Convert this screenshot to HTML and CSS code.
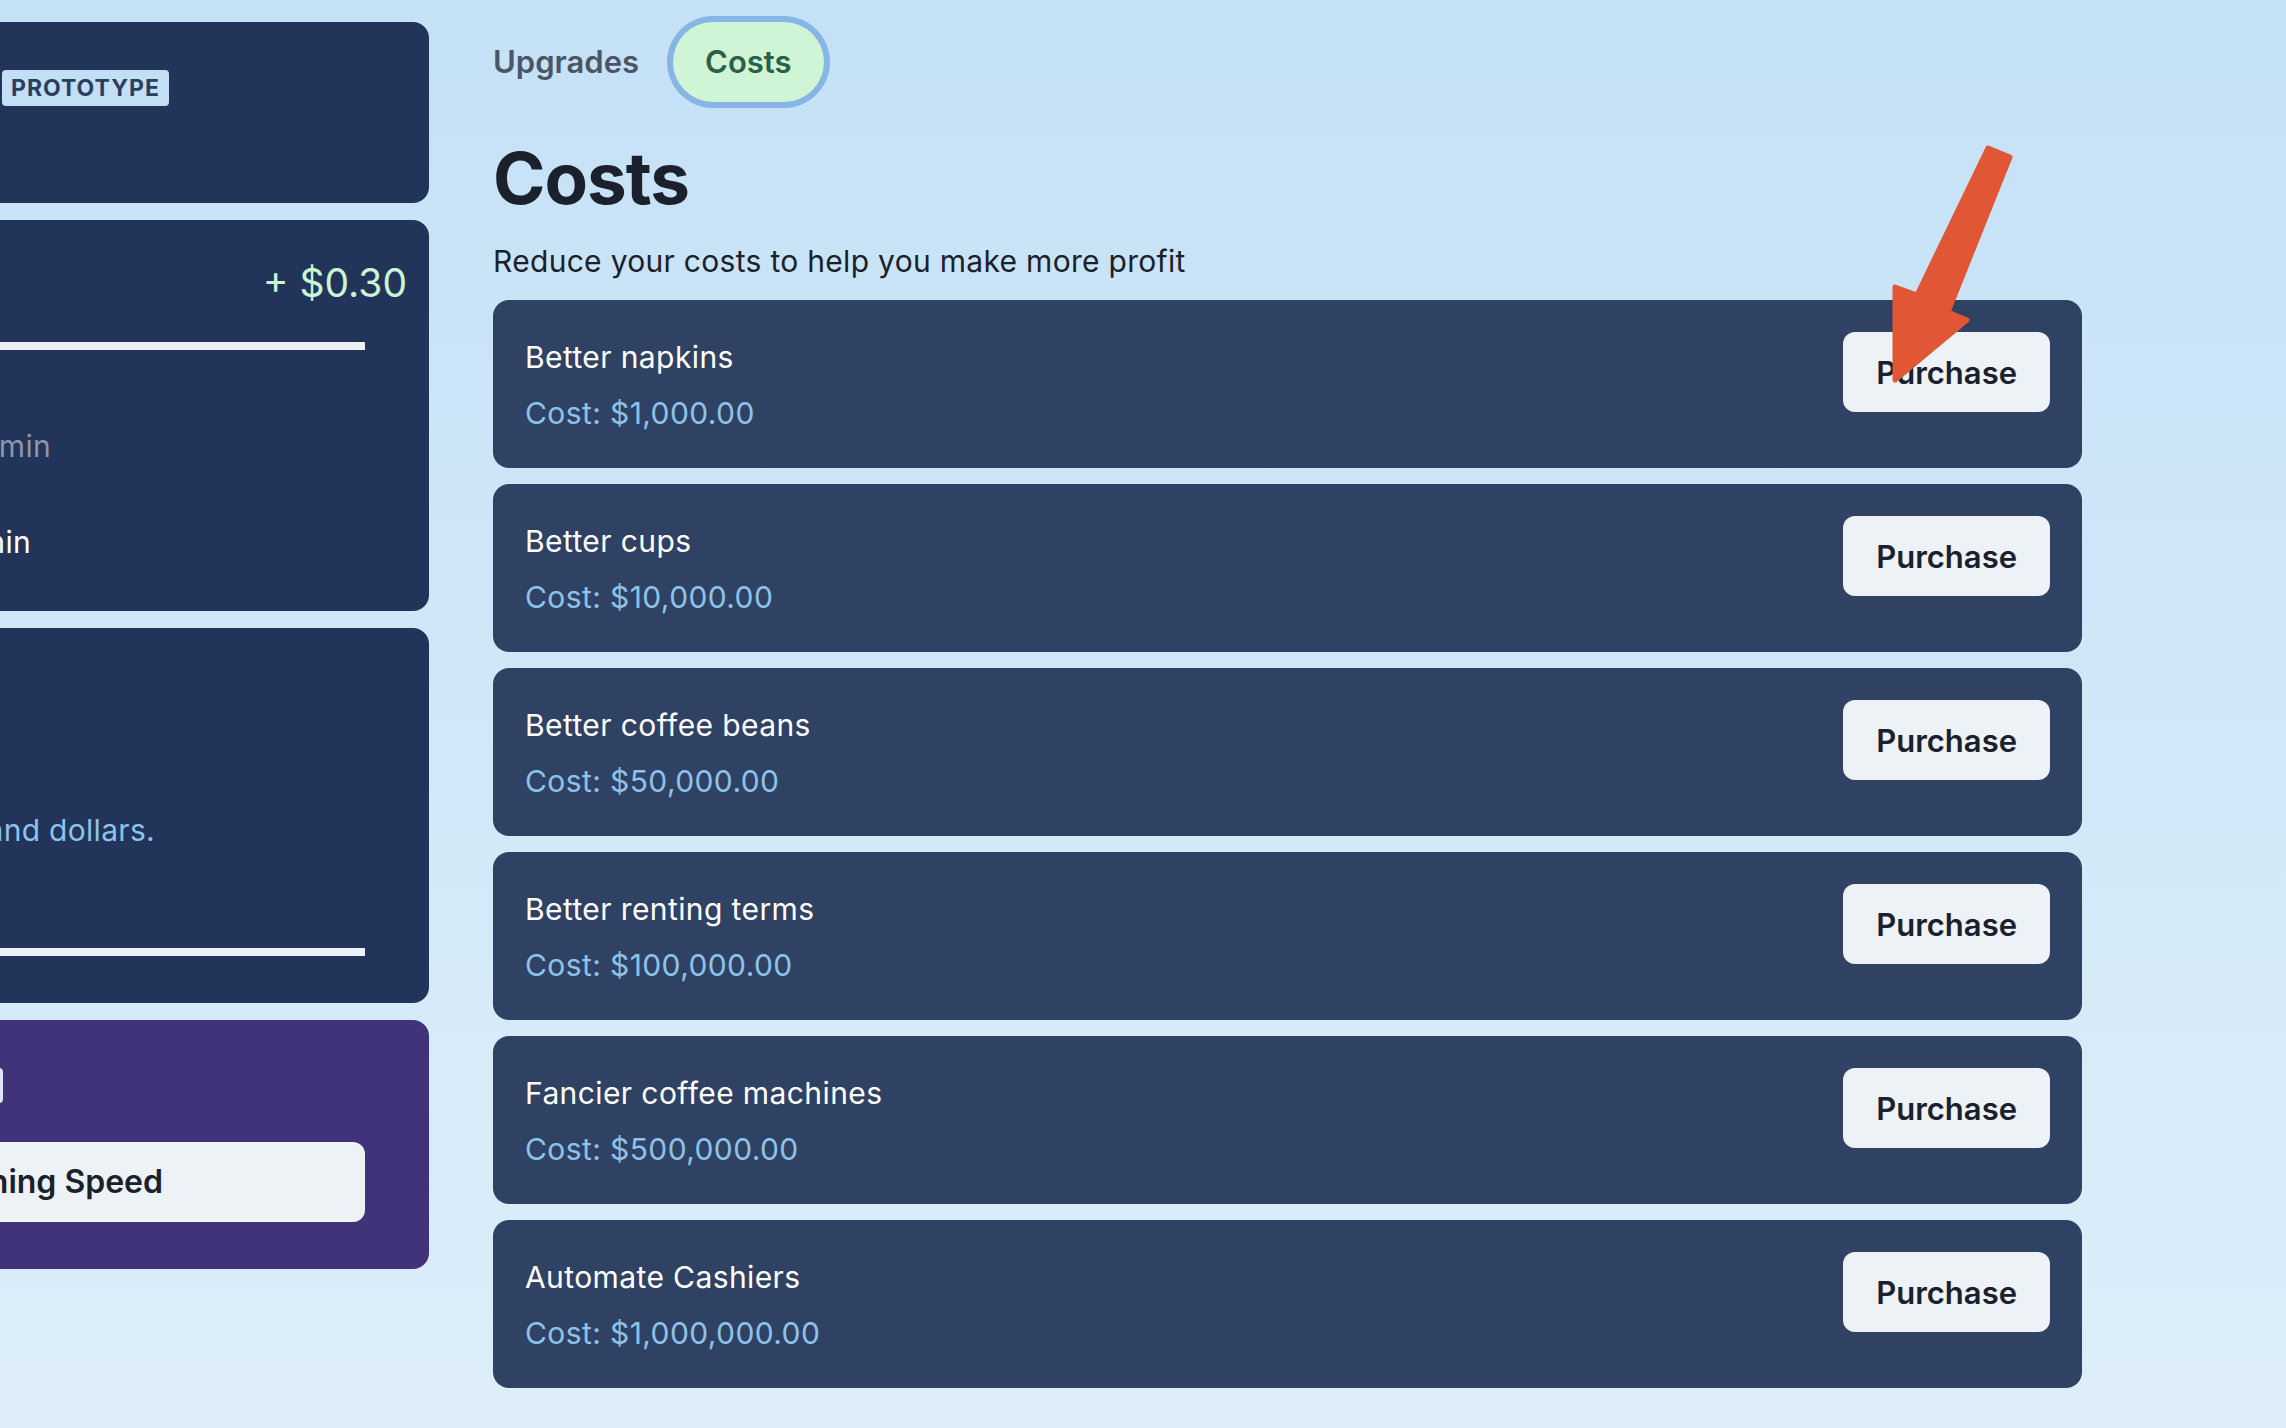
FILE: index.html
```html
<!DOCTYPE html>
<html lang="en">
<head>
<meta charset="utf-8">
<title>Costs</title>
<link rel="stylesheet" href="styles.css">
</head>
<body>
<div class="app">
  <aside class="sidebar">
    <section class="side-card card-brand">
      <div class="brand-row">
        <span class="brand-title">Coffee Shop</span>
        <span class="badge">Prototype</span>
      </div>
    </section>

    <section class="side-card card-money">
      <div class="money-row">
        <span class="money-label">Money: $12.45</span>
        <span class="money-gain">+ $0.30</span>
      </div>
      <div class="bar"></div>
      <p class="line muted end-51">Customer every 0.5 min</p>
      <p class="line end-31">Revenue $0.60 / min</p>
    </section>

    <section class="side-card card-goal">
      <p class="line info end-155">Goal: reach one thousand dollars.</p>
      <div class="bar"></div>
    </section>

    <section class="side-card card-speed">
      <div class="tag-row"><span class="tag">Lvl 1</span></div>
      <button class="speed-btn"><span class="speed-label">Increase Earning Speed</span></button>
    </section>
  </aside>

  <main class="main">
    <nav class="tabs">
      <button class="tab">Upgrades</button>
      <button class="tab tab-active">Costs</button>
    </nav>
    <h1 class="title">Costs</h1>
    <p class="subtitle">Reduce your costs to help you make more profit</p>

    <ul class="cost-list">
      <li class="cost-card">
        <div class="cost-info"><p class="cost-name">Better napkins</p><p class="cost-price">Cost: $1,000.00</p></div>
        <button class="buy">Purchase</button>
      </li>
      <li class="cost-card">
        <div class="cost-info"><p class="cost-name">Better cups</p><p class="cost-price">Cost: $10,000.00</p></div>
        <button class="buy">Purchase</button>
      </li>
      <li class="cost-card">
        <div class="cost-info"><p class="cost-name">Better coffee beans</p><p class="cost-price">Cost: $50,000.00</p></div>
        <button class="buy">Purchase</button>
      </li>
      <li class="cost-card">
        <div class="cost-info"><p class="cost-name">Better renting terms</p><p class="cost-price">Cost: $100,000.00</p></div>
        <button class="buy">Purchase</button>
      </li>
      <li class="cost-card">
        <div class="cost-info"><p class="cost-name">Fancier coffee machines</p><p class="cost-price">Cost: $500,000.00</p></div>
        <button class="buy">Purchase</button>
      </li>
      <li class="cost-card">
        <div class="cost-info"><p class="cost-name">Automate Cashiers</p><p class="cost-price">Cost: $1,000,000.00</p></div>
        <button class="buy">Purchase</button>
      </li>
    </ul>
  </main>
</div>

<svg class="arrow" viewBox="1870 130 160 270" width="160" height="270" aria-hidden="true">
  <polygon points="1988,148 2010,157 1948,312 1967,320 1895,380 1895,287 1917,295"
           fill="#e15634" stroke="#e15634" stroke-width="5" stroke-linejoin="round"/>
</svg>
</body>
</html>
```

FILE: styles.css
```css
* { box-sizing: border-box; }

html, body {
  margin: 0;
  padding: 0;
}

body {
  width: 2286px;
  height: 1428px;
  overflow: hidden;
  position: relative;
  font-family: Inter, "Noto Sans", "Liberation Sans", sans-serif;
  background: linear-gradient(180deg, #c5e1f6 0%, #d2e8f8 55%, #ddeefa 100%);
  color: #1a202c;
}

p { margin: 0; }

button {
  font-family: inherit;
  border: 0;
  cursor: pointer;
}

.app {
  display: flex;
  align-items: flex-start;
  gap: 64px;
  padding-top: 22px;
}

/* ---------- sidebar ---------- */
.sidebar {
  flex: 0 0 989px;
  width: 989px;
  margin-left: -560px;
  display: flex;
  flex-direction: column;
  gap: 17px;
}

.side-card {
  background: #22345a;
  border-radius: 16px;
  padding: 0 22px;
  color: #ffffff;
}

.card-brand { height: 181px; padding-top: 48px; }
.card-money { height: 391px; padding-top: 33px; }
.card-goal { height: 375px; padding-top: 180px; }
.card-speed { height: 249px; padding-top: 48px; background: #41337a; }

.brand-row {
  display: flex;
  align-items: center;
  height: 36px;
}

.brand-title {
  width: 540px;
  flex: 0 0 540px;
  font-size: 36px;
  font-weight: 700;
  white-space: nowrap;
}

.badge {
  display: inline-flex;
  align-items: center;
  height: 36px;
  padding: 0 9px;
  border-radius: 4px;
  background: #c3dff5;
  color: #2c3e5f;
  font-size: 23px;
  font-weight: 700;
  letter-spacing: 1px;
  text-transform: uppercase;
}

.money-row {
  display: flex;
  justify-content: space-between;
  align-items: center;
  height: 60px;
  font-size: 39px;
  line-height: 60px;
}

.money-gain { color: #c9f5d3; }

.bar {
  width: 903px;
  height: 8px;
  background: #edf1f6;
}

.card-money .bar { margin-top: 29px; }
.card-goal .bar { margin-top: 95px; }

.line {
  font-size: 30px;
  line-height: 45px;
  text-align: right;
  white-space: nowrap;
  letter-spacing: 0.3px;
}

.muted { color: #8c96a8; margin-top: 74px; }
.card-money .end-31 { margin-top: 51px; }
.info { color: #8cc3eb; }

.end-51 { width: 589px; }
.end-31 { width: 569px; }
.end-155 { width: 693px; }

.tag-row {
  width: 541px;
  display: flex;
  justify-content: flex-end;
}

.tag {
  display: inline-flex;
  align-items: center;
  height: 35px;
  padding: 0 9px;
  border-radius: 4px;
  background: #dfe5f4;
  color: #41337a;
  font-size: 22px;
  font-weight: 700;
}

.speed-btn {
  display: block;
  margin-top: 39px;
  width: 903px;
  height: 80px;
  padding: 0;
  border-radius: 12px;
  background: #edf2f7;
  color: #1a202c;
  text-align: left;
}

.speed-label {
  display: block;
  width: 701px;
  text-align: right;
  white-space: nowrap;
  font-size: 32px;
  font-weight: 600;
  line-height: 80px;
}

/* ---------- main ---------- */
.main {
  width: 1589px;
  flex: 0 0 1589px;
}

.tabs {
  display: flex;
  align-items: center;
  gap: 34px;
}

.tab {
  background: transparent;
  height: 80px;
  padding: 0;
  font-size: 31px;
  font-weight: 600;
  line-height: 48px;
  color: #4a5568;
}

.tab-active {
  padding: 0 32px;
  border-radius: 40px;
  background: #cff5d6;
  color: #2b6147;
  box-shadow: 0 0 0 6px #86b5e6;
}

.title {
  margin: 33px 0 0;
  font-size: 71px;
  font-weight: 700;
  line-height: 86px;
  letter-spacing: -1px;
  color: #1a202c;
}

.subtitle {
  margin-top: 18px;
  font-size: 30px;
  line-height: 45px;
  letter-spacing: 0.3px;
  color: #1a202c;
}

.cost-list {
  list-style: none;
  margin: 16px 0 0;
  padding: 0;
  display: flex;
  flex-direction: column;
  gap: 16px;
}

.cost-card {
  display: flex;
  justify-content: space-between;
  align-items: flex-start;
  height: 168px;
  padding: 32px;
  border-radius: 16px;
  background: #304263;
}

.cost-name {
  margin-top: 3px;
  font-size: 30px;
  line-height: 45px;
  letter-spacing: 0.4px;
  color: #ffffff;
}

.cost-price {
  margin-top: 11px;
  font-size: 30px;
  line-height: 45px;
  letter-spacing: 0.4px;
  color: #8cc3eb;
}

.buy {
  height: 80px;
  padding: 0 33px;
  border-radius: 12px;
  background: #edf2f7;
  color: #1a202c;
  font-size: 31px;
  font-weight: 600;
}

/* ---------- annotation arrow ---------- */
.arrow {
  position: absolute;
  left: 1870px;
  top: 130px;
  pointer-events: none;
}
```
